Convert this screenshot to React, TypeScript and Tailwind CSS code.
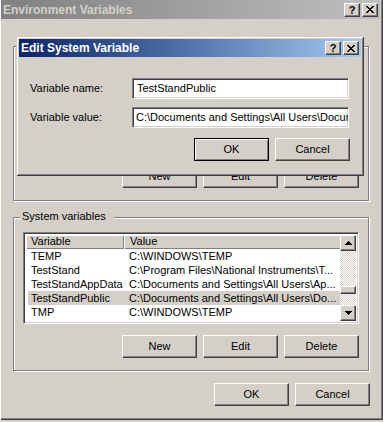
import React from 'react';

// classic 3D edges
const raised =
  'bg-[#d4d0c8] border border-t-white border-l-white border-r-[#404040] border-b-[#404040] shadow-[inset_-1px_-1px_0_#808080]';
const sunken =
  'border border-t-[#808080] border-l-[#808080] border-r-white border-b-white shadow-[inset_1px_1px_0_#404040,inset_-1px_-1px_0_#d4d0c8]';
const etched = 'border border-[#808080] shadow-[inset_1px_1px_0_#fff,1px_1px_0_#fff]';

const systemVars: [string, string][] = [
  ['TEMP', 'C:\\WINDOWS\\TEMP'],
  ['TestStand', 'C:\\Program Files\\National Instruments\\T...'],
  ['TestStandAppData', 'C:\\Documents and Settings\\All Users\\Ap...'],
  ['TestStandPublic', 'C:\\Documents and Settings\\All Users\\Do...'],
  ['TMP', 'C:\\WINDOWS\\TEMP'],
  ['windir', 'C:\\WINDOWS'],
];

function PushButton({ label, isDefault }: { label: string; isDefault?: boolean }) {
  return (
    <button
      className={`w-[75px] h-[23px] flex items-center justify-center text-[11px] leading-none ${
        isDefault
          ? 'bg-[#d4d0c8] border border-black shadow-[inset_1px_1px_0_#fff,inset_-1px_-1px_0_#808080]'
          : raised
      }`}
    >
      {label}
    </button>
  );
}

function CaptionButtons() {
  return (
    <div className="flex items-center gap-[2px]">
      <span className={`${raised} w-[16px] h-[14px] flex items-center justify-center text-[11px] font-bold leading-none pt-[1px]`}>
        ?
      </span>
      <span className={`${raised} w-[16px] h-[14px] flex items-center justify-center`}>
        <svg width="8" height="7" viewBox="0 0 8 7" shapeRendering="crispEdges">
          <path d="M0 0h2v1h1v1h2V1h1V0h2v1H7v1H6v1H5v1h1v1h1v1h1v1H6V6H5V5H3v1H2v1H0V6h1V5h1V4h1V3H2V2H1V1H0z" fill="#000" />
        </svg>
      </span>
    </div>
  );
}

function Arrow({ down }: { down?: boolean }) {
  return (
    <svg width="7" height="4" viewBox="0 0 7 4" shapeRendering="crispEdges" className={down ? 'rotate-180' : ''}>
      <path d="M3 0h1v1h1v1h1v1h1v1H0V3h1V2h1V1h1z" fill="#000" />
    </svg>
  );
}

function GroupBox({ title, className, children }: { title?: string; className?: string; children: React.ReactNode }) {
  return (
    <div className={`relative w-[356px] ${etched} ${className ?? ''}`}>
      {title && (
        <span className="absolute -top-[8px] left-[6px] bg-[#d4d0c8] pl-[2px] pr-[8px] leading-[13px]">{title}</span>
      )}
      {children}
    </div>
  );
}

export default function App() {
  return (
    <div className="w-[383px] h-[422px] bg-[#d4d0c8] relative overflow-hidden text-[11px] text-black font-['Liberation_Sans','DejaVu_Sans',sans-serif]">
      {/* Environment Variables window */}
      <div className="h-[420px] flex flex-col pl-[1px] pr-[3px] shadow-[inset_1px_0_0_#fff,inset_-1px_-1px_0_#404040,inset_-2px_-2px_0_#808080]">
        <div className="h-[19px] flex items-center justify-between pl-[2px] pr-[2px] bg-linear-to-r from-[#808080] to-[#c0c0c0]">
          <span className="font-bold text-[12px] text-[#d4d0c8] leading-none">Environment Variables</span>
          <CaptionButtons />
        </div>

        <div className="flex flex-col pl-[12px]">
          {/* user variables group, mostly hidden behind the dialog */}
          <GroupBox className="mt-[27px] h-[155px] flex flex-col justify-end px-[9px] pb-[12px]">
            <div className={`flex-1 mb-[12px] mt-[14px] bg-white ${sunken}`} />
            <div className="flex justify-end gap-[6px]">
              <PushButton label="New" />
              <PushButton label="Edit" />
              <PushButton label="Delete" />
            </div>
          </GroupBox>

          <GroupBox title="System variables" className="mt-[16px] px-[9px] pt-[14px] pb-[12px]">
            <div className={`h-[92px] flex bg-white overflow-hidden ${sunken} p-[2px]`}>
              <div className="flex-1 flex flex-col overflow-hidden">
                <div className="h-[14px] flex shrink-0">
                  <div className="w-[98px] pl-[5px] leading-[13px] bg-[#d4d0c8] shadow-[inset_1px_1px_0_#fff,inset_-1px_-1px_0_#808080]">
                    Variable
                  </div>
                  <div className="flex-1 pl-[6px] leading-[13px] bg-[#d4d0c8] shadow-[inset_1px_1px_0_#fff,inset_0_-1px_0_#808080]">
                    Value
                  </div>
                </div>
                {systemVars.map(([name, value]) => (
                  <div
                    key={name}
                    className={`ml-[2px] h-[14px] shrink-0 flex leading-[14px] whitespace-nowrap ${
                      name === 'TestStandPublic' ? 'bg-[#d4d0c8]' : ''
                    }`}
                  >
                    <div className="w-[96px] pl-[3px]">{name}</div>
                    <div className="flex-1 pl-[5px] overflow-hidden">{value}</div>
                  </div>
                ))}
              </div>
              {/* vertical scrollbar */}
              <div className="w-[16px] flex flex-col">
                <div className={`${raised} h-[16px] flex items-center justify-center`}>
                  <Arrow />
                </div>
                <div className="flex-1 bg-[image:repeating-conic-gradient(#d4d0c8_0_25%,#fff_0_50%)] bg-[length:2px_2px]">
                  <div className={`${raised} h-[8px] mt-[35px]`} />
                </div>
                <div className={`${raised} h-[16px] flex items-center justify-center`}>
                  <Arrow down />
                </div>
              </div>
            </div>
            <div className="flex justify-end gap-[6px] mt-[11px]">
              <PushButton label="New" />
              <PushButton label="Edit" />
              <PushButton label="Delete" />
            </div>
          </GroupBox>

          <div className="w-[357px] flex justify-end gap-[6px] mt-[12px]">
            <PushButton label="OK" />
            <PushButton label="Cancel" />
          </div>
        </div>
      </div>

      {/* Edit System Variable dialog, on top */}
      <div className="absolute left-[16px] top-[36px] w-[348px] h-[140px] flex flex-col p-[3px] bg-[#d4d0c8] shadow-[inset_1px_1px_0_#d4d0c8,inset_-1px_-1px_0_#404040,inset_2px_2px_0_#fff,inset_-2px_-2px_0_#808080]">
        <div className="h-[18px] flex items-center justify-between pl-[2px] pr-[2px] bg-linear-to-r from-[#0a246a] to-[#a6caf0]">
          <span className="font-bold text-[12px] text-white leading-none">Edit System Variable</span>
          <CaptionButtons />
        </div>
        <div className="flex flex-col px-[11px] pt-[21px]">
          <div className="flex items-center">
            <span className="w-[102px]">Variable name:</span>
            <div className={`w-[217px] h-[21px] bg-white ${sunken} pl-[4px] flex items-center whitespace-nowrap overflow-hidden`}>
              TestStandPublic
            </div>
          </div>
          <div className="flex items-center mt-[8px]">
            <span className="w-[102px]">Variable value:</span>
            <div className={`w-[217px] h-[21px] bg-white ${sunken} pl-[3px] flex items-center whitespace-nowrap overflow-hidden`}>
              C:\Documents and Settings\All Users\Documents\National Instruments\TestStand 4.1
            </div>
          </div>
          <div className="flex justify-end gap-[6px] mt-[10px]">
            <PushButton label="OK" isDefault />
            <PushButton label="Cancel" />
          </div>
        </div>
      </div>
    </div>
  );
}
